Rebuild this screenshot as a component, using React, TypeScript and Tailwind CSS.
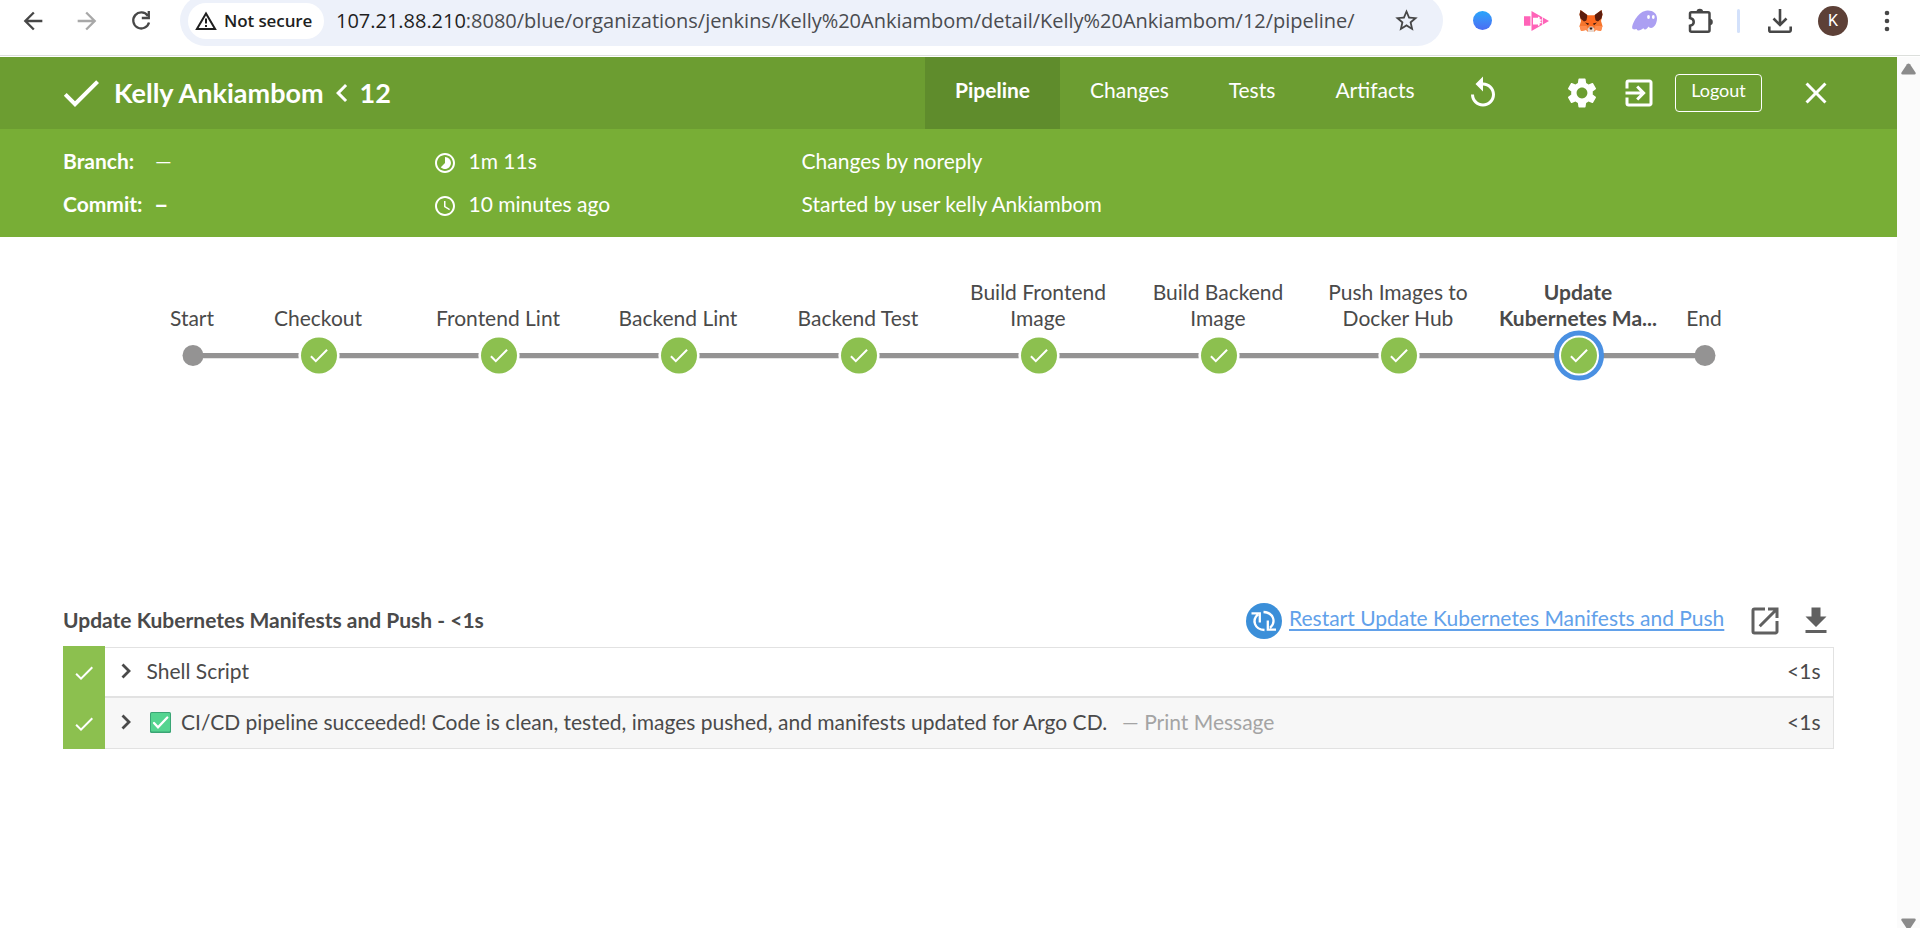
import React from "react";
import {
  MdAccessTime,
  MdArrowBack,
  MdArrowForward,
  MdCheck,
  MdChevronLeft,
  MdClose,
  MdExitToApp,
  MdLaunch,
  MdReplay,
  MdSettings,
  MdStarBorder,
  MdTimelapse,
} from "react-icons/md";

function FoxIcon() {
  return (
    <svg width="24" height="22" viewBox="0 0 24 22">
      <path d="M1.500 0L9 5.500h6L22.500 0l1 4.500-1.500 6.500 1.500 5-1.500 5-5-1-2 2H9l-2-2-5 1-1.500-5L2 11 .5 4.500z" fill="#f6752c" />
      <path d="M1.500 0L8 4.800l1.500 5L5 11.500 1.500 8.500.5 4.500zM22.500 0L16 4.800l-1.500 5 4.500 1.700 3.500-3 1-4z" fill="#5d1d0d" />
      <path d="M8.500 5.500h7l1.500 7-5 5-5-5z" fill="#ff6a1f" />
      <path d="M.5 16h7l1.500 3.500-2 .5-5 1zM23.500 16h-7L15 19.500l2 .5 5 1z" fill="#ff8c4e" />
      <path d="M6 12.500l4 1-1 1.700zM18 12.500l-4 1 1 1.700z" fill="#3b1710" />
      <path d="M8.500 19l2-2.500h3l2 2.500-.5 3H9z" fill="#e6d8d0" />
      <path d="M10.500 17.500h3l-.5 2h-2z" fill="#2a1512" />
    </svg>
  );
}

function GhostIcon() {
  return (
    <svg width="26" height="22" viewBox="0 0 26 22">
      <path
        d="M15.500 .5C21 .3 25 3.500 25 8.500c0 5-3 9.500-6 9.500-1.500 0-2-1-2.500-1.500-.8 1.500-2 3-3.500 3-1.200 0-1.500-.8-1.500-1.500-1.500 1.500-3.500 2.500-5 2.500-2 0-1.500-1.500-2-1.500-.8.200-3.800 1.200-4.300-1C-.3 14.500 6 .9 15.500.5z"
        fill="#ab9ff2"
      />
      <ellipse cx="16.500" cy="7" rx="1.400" ry="2" fill="#fff" />
      <ellipse cx="21.300" cy="7" rx="1.400" ry="2" fill="#fff" />
    </svg>
  );
}

function BrowserBar() {
  return (
    <div className="flex h-[56px] w-full items-start overflow-hidden border-b border-[#dcdfdc] bg-white text-[#474747]">
      <div className="flex h-[42px] w-[180px] shrink-0 items-center pl-[19px]">
        <MdArrowBack size={28} />
        <MdArrowForward size={28} className="ml-[26px] text-[#a8a8a8]" />
        <svg width="20" height="20" viewBox="0 0 20 20" fill="none" stroke="currentColor" strokeWidth="2.3" className="ml-[30px]">
          <path d="M16.800 4.800A8 8 0 1 0 18 11.500M17.800 0v7h-7" />
        </svg>
      </div>
      <div className="-mt-[5px] flex h-[51px] w-[1263px] shrink-0 items-center rounded-[26px] bg-[#edf1fa] pl-2">
        <div className="flex h-[36px] w-[136px] shrink-0 items-center rounded-full bg-white pl-[7px] text-[#1f1f1f]">
          <svg width="22" height="20" viewBox="0 0 22 20" fill="none" stroke="currentColor" strokeWidth="2">
            <path d="M11 2.500L1.900 18h18.200z" />
            <path d="M11 7.500v5M11 14v2" />
          </svg>
          <span className="ml-[7px] whitespace-nowrap font-['Open_Sans'] text-[17px] font-semibold tracking-[-0.1px]">Not secure</span>
        </div>
        <div className="ml-[12px] w-[1040px] whitespace-nowrap font-['Open_Sans'] text-[20px] tracking-[-0.02px] text-[#4a4c50]">
          <span className="text-[#1f1f1f]">107.21.88.210</span>
          :8080/blue/organizations/jenkins/Kelly%20Ankiambom/detail/Kelly%20Ankiambom/12/pipeline/
        </div>
        <MdStarBorder size={27} className="ml-[17px]" />
      </div>
      <div className="flex h-[41px] flex-1 items-center">
        <div className="ml-[30px] size-[19px] shrink-0 rounded-full bg-linear-to-b from-[#25a5fb] to-[#4a6cf3]" />
        <svg width="26" height="20" viewBox="0 0 26 20" className="ml-[32px] shrink-0">
          <path d="M0 5.200h6.500v9.600H0zM7.500 0L25 10 7.500 20z" fill="#ff63b8" />
          <path d="M9 6.700h5V5.500l1.700.8v2h1.800v1.400h-1.200v1h1.200v1.500h-1.800v2l-1.700.8v-1.500H9zM18 6v8l.8-.4V6.400z" fill="#fff" />
        </svg>
        <div className="ml-[29px] shrink-0">
          <FoxIcon />
        </div>
        <div className="ml-[29px] shrink-0">
          <GhostIcon />
        </div>
        <svg width="26" height="26" viewBox="0 0 26 26" className="ml-[30px] shrink-0">
          <path
            d="M3.500 4.200h16.500a1.500 1.500 0 0 1 1.500 1.500v16.500a1.500 1.500 0 0 1-1.500 1.500H3.500A1.500 1.500 0 0 1 2 22.200v-4.400c5-1.200 5-6.600 0-7.800V5.700a1.500 1.500 0 0 1 1.500-1.500z"
            fill="none"
            stroke="#474747"
            strokeWidth="2.500"
          />
          <path d="M8.500 4a3.300 3.300 0 0 1 6.600 0zM21.500 10.700a3.300 3.300 0 0 1 0 6.600z" fill="#474747" />
        </svg>
        <div className="ml-[23px] h-6 w-[3px] shrink-0 rounded-full bg-[#d3e1fb]" />
        <svg width="24" height="24" viewBox="0 0 24 24" fill="none" stroke="currentColor" strokeWidth="2.600" className="ml-[28px] shrink-0">
          <path d="M12 0v15.500M5.500 9.500l6.500 6.500 6.500-6.500M1.300 17.500v3.700a1.500 1.500 0 0 0 1.500 1.500h18.400a1.500 1.500 0 0 0 1.500-1.500v-3.700" />
        </svg>
        <div className="ml-[26px] mt-px flex size-[30px] shrink-0 items-center justify-center rounded-full bg-[#5d4037] font-['Roboto'] text-[16px] text-white">
          K
        </div>
        <svg width="6" height="22" viewBox="0 0 6 22" fill="currentColor" className="ml-[36px] shrink-0">
          <circle cx="3" cy="3" r="2.300" />
          <circle cx="3" cy="11" r="2.300" />
          <circle cx="3" cy="19" r="2.300" />
        </svg>
      </div>
    </div>
  );
}

function RunHeader() {
  return (
    <header className="text-white">
      <div className="flex h-[72px] items-center bg-[#6c9d31] pl-[57px]">
        <MdCheck size={48} className="shrink-0" />
        <h1 className="ml-[9px] flex w-[811px] items-center whitespace-nowrap text-[27px] font-bold">
          <span>Kelly Ankiambom</span>
          <MdChevronLeft size={36} />
          <span>12</span>
        </h1>
        <nav className="flex h-full shrink-0 pb-[6px] text-[21px] leading-[66px]">
          <a className="-mb-[6px] w-[135px] bg-[#5f8c2c] text-center font-bold">Pipeline</a>
          <a className="w-[139px] text-center">Changes</a>
          <a className="w-[106px] text-center">Tests</a>
          <a className="w-[140px] text-center">Artifacts</a>
        </nav>
        <MdReplay size={36} className="ml-[20px] shrink-0" />
        <MdSettings size={36} className="ml-[63px] shrink-0" />
        <MdExitToApp size={36} className="ml-[21px] shrink-0" />
        <button className="ml-[18px] h-[38px] w-[87px] shrink-0 rounded-[4px] border border-white pb-[6px] text-[18px] leading-none">
          Logout
        </button>
        <MdClose size={36} className="ml-[36px] shrink-0" />
      </div>
      <div className="grid h-[108px] grid-cols-[370.5px_368px_1fr] bg-[#78ae36] pt-[10px] pl-[63px] text-[21px] leading-[43px]">
        <div>
          <div className="flex">
            <b className="w-[92px]">Branch:</b>
            <span>—</span>
          </div>
          <div className="flex">
            <b className="w-[91px]">Commit:</b>
            <b className="text-[25px]">–</b>
          </div>
        </div>
        <div className="-ml-px">
          <div className="flex items-center">
            <MdTimelapse size={24} className="mt-[4px] mr-[12px]" />
            1m 11s
          </div>
          <div className="flex items-center">
            <MdAccessTime size={24} className="mt-[4px] mr-[12px]" />
            10 minutes ago
          </div>
        </div>
        <div>
          <div>Changes by noreply</div>
          <div>Started by user kelly Ankiambom</div>
        </div>
      </div>
    </header>
  );
}

type Stage = { x: number; label: string; selected?: boolean; terminal?: boolean };

const stages: Stage[] = [
  { x: 193, label: "Start", terminal: true },
  { x: 319, label: "Checkout" },
  { x: 499, label: "Frontend Lint" },
  { x: 679, label: "Backend Lint" },
  { x: 859, label: "Backend Test" },
  { x: 1039, label: "Build Frontend\nImage" },
  { x: 1219, label: "Build Backend\nImage" },
  { x: 1399, label: "Push Images to\nDocker Hub" },
  { x: 1579, label: "Update\nKubernetes Ma...", selected: true },
  { x: 1705, label: "End", terminal: true },
];

function StageNode({ stage }: { stage: Stage }) {
  if (stage.terminal) return <circle cx={stage.x} cy="118.500" r="10.500" fill="#949393" />;
  return (
    <g>
      {stage.selected ? (
        <circle cx={stage.x} cy="118.500" r="22.500" fill="#fff" stroke="#4a90e2" strokeWidth="5" />
      ) : (
        <circle cx={stage.x} cy="118.500" r="20.600" fill="#fff" />
      )}
      <circle cx={stage.x} cy="118.500" r="18" fill="#8cc04f" />
      <path
        d="M9 16.170L4.830 12l-1.420 1.410L9 19 21 7l-1.410-1.410z"
        fill="#fff"
        transform={`translate(${stage.x - 12.2} 106.500)`}
      />
    </g>
  );
}

function PipelineGraph() {
  return (
    <div className="relative h-[355px]">
      <svg width="1897" height="200" viewBox="0 0 1897 200">
        <path d="M193 118.500H1705" stroke="#949393" strokeWidth="5.250" />
        {stages.map((s) => (
          <StageNode key={s.x} stage={s} />
        ))}
      </svg>
      {stages.map((s) => (
        <div
          key={s.x}
          className={`absolute top-0 flex h-[94px] w-[200px] items-end justify-center text-center text-[21px] leading-[26px] whitespace-pre ${s.selected ? "font-bold" : ""}`}
          style={{ left: s.x - 101 }}
        >
          {s.label}
        </div>
      ))}
    </div>
  );
}

function ExpandChevron() {
  return (
    <svg width="10" height="16" viewBox="0 0 10 16" fill="none" stroke="currentColor" strokeWidth="2.800" className="shrink-0">
      <path d="M1.500 1.500L8 8l-6.500 6.500" />
    </svg>
  );
}

function StatusCell() {
  return (
    <div className="flex w-[42px] shrink-0 items-center justify-center bg-[#8cc04f] pt-[2px] text-white">
      <MdCheck size={24} />
    </div>
  );
}

function StageLog() {
  return (
    <section className="pr-[63px] pl-[63px] text-[21px]">
      <div className="flex h-[54px] items-center">
        <h2 className="flex-1 pt-px font-bold">Update Kubernetes Manifests and Push - &lt;1s</h2>
        <svg width="36" height="36" viewBox="0 0 36 36" className="mt-[4px] shrink-0">
          <circle cx="18" cy="18" r="18" fill="#3b8fd9" />
          <g fill="none" stroke="#fff" strokeWidth="2.300">
            <path d="M18.500 27C8.500 26.500 5.500 17 12 11.300M5.500 10.400h8.300V19.500" />
            <path d="M17.500 9C27.500 9.500 30.500 19 24 24.800M30 26.600h-8.200V17.500" />
          </g>
        </svg>
        <a className="ml-[7px] w-[436px] pb-[2px] whitespace-nowrap text-[#62a1ea] underline decoration-2 underline-offset-[3px]">
          Restart Update Kubernetes Manifests and Push
        </a>
        <MdLaunch size={36} className="mt-[4px] ml-[22px] shrink-0 text-[#606060]" />
        <svg width="36" height="36" viewBox="0 0 24 24" fill="#606060" className="mt-[4px] ml-[15px] shrink-0">
          <path d="M19 9h-4V3H9v6H5l7 7 7-7zM5 18v2h14v-2H5z" />
        </svg>
      </div>
      <div className="flex h-[51px]">
        <StatusCell />
        <div className="mt-px flex flex-1 items-center border-t border-r border-b border-[#e2e2e2] pr-[12.500px] pb-[2px] pl-[16px]">
          <ExpandChevron />
          <span className="ml-[15.500px] flex-1">Shell Script</span>
          <span>&lt;1s</span>
        </div>
      </div>
      <div className="flex h-[52px]">
        <StatusCell />
        <div className="flex flex-1 items-center border-t border-r border-b border-[#e2e2e2] bg-[#f7f7f7] pr-[12.500px] pb-[2px] pl-[16px]">
          <ExpandChevron />
          <svg width="21" height="21" viewBox="0 0 21 21" className="ml-[19px] shrink-0">
            <rect width="21" height="21" rx="1.500" fill="#3aa575" />
            <rect x="1" y="1" width="19" height="18.500" rx="1" fill="#54d490" />
            <path d="M4 11l4 4.300 9.300-9.800" fill="none" stroke="#fff" strokeWidth="2.300" strokeLinecap="round" />
          </svg>
          <span className="ml-[10px] whitespace-nowrap">
            CI/CD pipeline succeeded! Code is clean, tested, images pushed, and manifests updated for Argo CD.
          </span>
          <span className="ml-[15px] flex-1 text-[#a4a4a4]">— Print Message</span>
          <span>&lt;1s</span>
        </div>
      </div>
    </section>
  );
}

function Scrollbar() {
  return (
    <div className="flex w-[23px] shrink-0 flex-col items-center justify-between bg-[#fbfbfb] pt-[6px]">
      <svg width="15" height="12" viewBox="0 0 15 12" fill="#8b8b8b">
        <path d="M6 1.200q1.500-1.600 3 0l5.500 8.300q.8 2-1.200 2H1.700q-2 0-1.200-2z" />
      </svg>
      <svg width="15" height="10" viewBox="0 0 15 10" fill="#8b8b8b">
        <path d="M6 10.800q1.500 1.600 3 0l5.500-8.300q.8-2-1.200-2H1.700q-2 0-1.200 2z" />
      </svg>
    </div>
  );
}

export default function App() {
  return (
    <div className="flex h-[928px] w-[1920px] flex-col overflow-hidden bg-white font-['Lato',sans-serif] text-[#4a4a4a]">
      <BrowserBar />
      <div className="flex min-h-0 flex-1 pt-px">
        <main className="w-[1897px]">
          <RunHeader />
          <PipelineGraph />
          <StageLog />
        </main>
        <Scrollbar />
      </div>
    </div>
  );
}
